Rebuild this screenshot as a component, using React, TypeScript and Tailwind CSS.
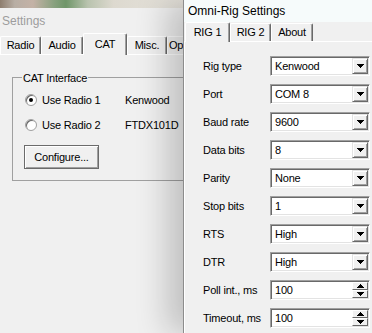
const Arrow = ({ up = false }: { up?: boolean }) => (
  <svg width="7" height="4" viewBox="0 0 7 4" className={up ? "rotate-180" : ""} shapeRendering="crispEdges">
    <rect x="0" y="0" width="7" height="1" />
    <rect x="1" y="1" width="5" height="1" />
    <rect x="2" y="2" width="3" height="1" />
    <rect x="3" y="3" width="1" height="1" />
  </svg>
);

const raised =
  "border border-t-[#e3e3e3] border-l-[#e3e3e3] border-b-[#696969] border-r-[#696969] bg-[#f0f0f0] shadow-[inset_1px_1px_0_#fff,inset_-1px_-1px_0_#a0a0a0]";

const Combo = ({ value, spin = false }: { value: string; spin?: boolean }) => (
  <div className="flex h-[20px] w-[100px] items-stretch border border-t-[#a0a0a0] border-l-[#a0a0a0] border-b-white border-r-white bg-white p-[1px] shadow-[inset_1px_1px_0_#696969,inset_-1px_-1px_0_#e3e3e3]">
    <span className="flex flex-1 items-center pl-[3px] leading-none">{value}</span>
    {spin ? (
      <div className="flex w-[16px] flex-col">
        <div className="flex h-[8px] items-center justify-center border border-t-white border-l-white border-b-[#696969] border-r-[#696969] bg-[#f0f0f0]">
          <Arrow up />
        </div>
        <div className="flex h-[8px] items-center justify-center border border-t-white border-l-white border-b-[#696969] border-r-[#696969] bg-[#f0f0f0]">
          <Arrow />
        </div>
      </div>
    ) : (
      <div className={`flex w-[16px] items-center justify-center ${raised}`}>
        <Arrow />
      </div>
    )}
  </div>
);

const Radio = ({ checked, label, rig }: { checked: boolean; label: string; rig: string }) => (
  <div className="flex h-[16px] items-center">
    <span className="ml-[1px] flex h-[12px] w-[12px] items-center justify-center rounded-full border border-[#a0a0a0] bg-white shadow-[inset_1px_1px_0_#696969]">
      {checked && <span className="h-[4px] w-[4px] rounded-full bg-black" />}
    </span>
    <span className="ml-[5px] w-[83px]">{label}</span>
    <span>{rig}</span>
  </div>
);

const leftTabs = [
  { name: "Radio", w: "w-[41px]" },
  { name: "Audio", w: "w-[42px]" },
  { name: "CAT", w: "w-[44px]", active: true },
  { name: "Misc.", w: "w-[40px]" },
  { name: "Op", w: "w-[40px] justify-start pl-[1px]" },
];

const rightTabs = [
  { name: "RIG 1", w: "w-[45px]", active: true },
  { name: "RIG 2", w: "w-[41px]" },
  { name: "About", w: "w-[42px]" },
];

const rows: [string, string, boolean?][] = [
  ["Rig type", "Kenwood"],
  ["Port", "COM 8"],
  ["Baud rate", "9600"],
  ["Data bits", "8"],
  ["Parity", "None"],
  ["Stop bits", "1"],
  ["RTS", "High"],
  ["DTR", "High"],
  ["Poll int., ms", "100", true],
  ["Timeout, ms", "100", true],
];

const Tab = ({ name, w, active, tall }: { name: string; w: string; active?: boolean; tall: string }) => (
  <div
    className={`flex shrink-0 items-center justify-center rounded-t-[2px] border-l border-t border-white border-r border-r-[#696969] bg-[#f0f0f0] shadow-[inset_-1px_0_0_#a0a0a0] ${w} ${
      active ? `relative z-10 -mb-px ${tall}` : "h-[18px]"
    }`}
  >
    {name}
  </div>
);

export default function App() {
  return (
    <div className="flex h-[333px] w-[372px] overflow-hidden bg-[#f0f0f0] font-['Liberation_Sans',Arial,sans-serif] text-[11px] tracking-[-0.2px] text-black">
      {/* background window */}
      <div className="flex w-[183px] shrink-0 flex-col overflow-hidden">
        <div className="h-[8px] shrink-0 bg-[linear-gradient(90deg,#8d7d6e_0%,#b8aea4_8%,#c4b2a6_18%,#86a07d_30%,#6f9669_36%,#b9c3ae_48%,#ddd9cf_62%,#e6e3dc_100%)]" />
        <div className="flex h-[25px] shrink-0 items-center pl-[2px] text-[12px] tracking-normal text-[#9d9d9d]">Settings</div>
        <div className="flex h-[21px] shrink-0 items-end">
          {leftTabs.map((t) => (
            <Tab key={t.name} {...t} tall="h-[22px]" />
          ))}
        </div>
        <div className="flex-1 border-t border-white pl-[12px]">
          <div className="relative mt-[22px] w-[200px] border border-[#a0a0a0] pb-[11px] pl-[11px] pt-[14px]">
            <span className="absolute -top-[8px] left-[9px] bg-[#f0f0f0] px-[1px]">CAT Interface</span>
            <Radio checked label="Use Radio 1" rig="Kenwood" />
            <div className="mt-[9px]">
              <Radio checked={false} label="Use Radio 2" rig="FTDX101D" />
            </div>
            <button className="mt-[12px] flex h-[24px] w-[75px] items-center justify-center border border-[#6b6b6b] bg-[#f0f0f0] shadow-[inset_1px_1px_0_#fff,inset_-1px_-1px_0_#a0a0a0]">
              Configure...
            </button>
          </div>
        </div>
      </div>

      {/* Omni-Rig window */}
      <div className="relative flex flex-1 flex-col border-l border-[#8c8c8c] bg-[#f0f0f0] shadow-[-16px_0_30px_rgba(0,0,0,0.2)]">
        <div className="flex h-[22px] shrink-0 items-center bg-[#f6fbfb] pl-[4px] text-[12px] tracking-normal">Omni-Rig Settings</div>
        <div className="flex h-[19px] shrink-0 items-end pl-[1px]">
          {rightTabs.map((t) => (
            <Tab key={t.name} {...t} tall="h-[20px]" />
          ))}
        </div>
        <div className="flex-1 border-l border-t border-white pl-[18px] pt-[14px]">
          <div className="grid grid-cols-[67px_100px] gap-y-[8px]">
            {rows.map(([label, value, spin]) => (
              <div key={label} className="contents">
                <span className="flex h-[20px] items-center">{label}</span>
                <Combo value={value} spin={spin} />
              </div>
            ))}
          </div>
        </div>
      </div>
    </div>
  );
}
